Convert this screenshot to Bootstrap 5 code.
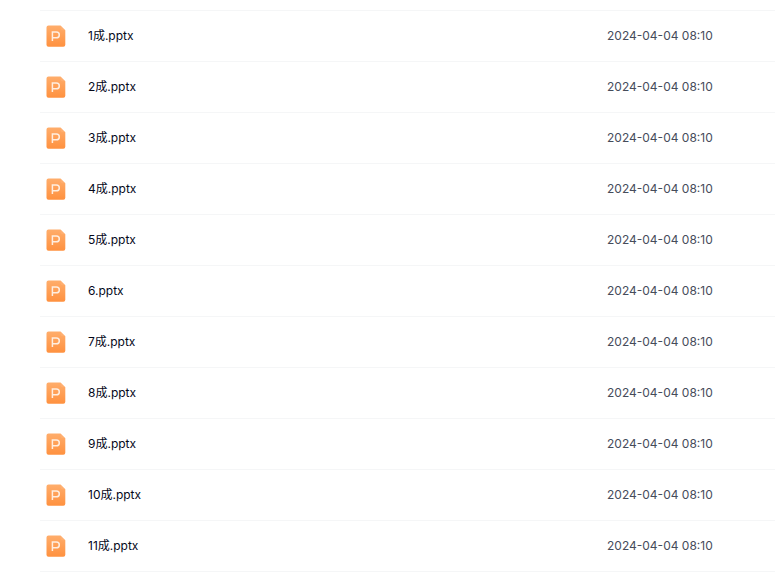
<!DOCTYPE html>
<html lang="zh-CN">
<head>
<meta charset="utf-8">
<meta name="viewport" content="width=device-width, initial-scale=1">
<title>文件列表</title>
<link rel="stylesheet" href="https://cdn.jsdelivr.net/npm/bootstrap@5.3.0/dist/css/bootstrap.min.css">
<style>
body{font-family:Inter,"Noto Sans CJK SC",sans-serif;font-size:12px;line-height:20px;background:#fff}
.file-list{padding:10px 0 0 40px}
.file-table{color:#05081a;border-top:1px solid #f5f6f7}
.file-table td{height:51px;padding:0;border-bottom:1px solid #f5f6f7;background:none}
.file-table .cell-icon{width:48px;padding-left:6px}
.file-table .cell-time{width:168px;color:#464c5b}
.file-icon{width:20px;height:24px}
</style>
</head>
<body>
<svg width="0" height="0" class="position-absolute" aria-hidden="true">
<defs>
<linearGradient id="fill" x1="0" y1="0" x2="0" y2="1"><stop offset="0" stop-color="#ffad6b"/><stop offset="1" stop-color="#ff913f"/></linearGradient>
<symbol id="ppt" viewBox="0 0 20 24"><path d="M2.500 1.500h12l4.800 4.800v14.500a2 2 0 0 1-2 2H2.500a2 2 0 0 1-2-2V3.500a2 2 0 0 1 2-2z" fill="url(#fill)"/><path d="M14.500 1.500l4.800 4.800H16.500a2 2 0 0 1-2-2z" fill="#ffc394" opacity=".25"/><path d="M6.400 17V8h4a2.900 2.900 0 0 1 0 5.800H6.400" fill="none" stroke="#ffeee0" stroke-width="1.500"/></symbol>
</defs>
</svg>
<main class="file-list">
<table class="table file-table mb-0 align-middle">
<tbody id="files"></tbody>
</table>
</main>
<script>
const names=["1成","2成","3成","4成","5成","6","7成","8成","9成","10成","11成"];
document.getElementById("files").innerHTML=names.map(n=>`<tr><td class="cell-icon"><svg class="file-icon d-block" aria-hidden="true"><use href="#ppt"/></svg></td><td>${n}.pptx</td><td class="cell-time">2024-04-04 08:10</td></tr>`).join("");
</script>
<script src="https://cdn.jsdelivr.net/npm/bootstrap@5.3.0/dist/js/bootstrap.bundle.min.js"></script>
</body>
</html>
